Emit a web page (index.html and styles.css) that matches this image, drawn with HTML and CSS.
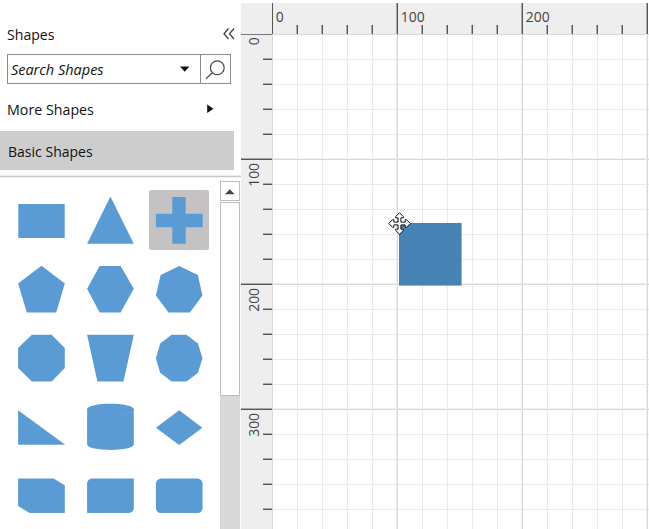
FILE: index.html
```html
<!DOCTYPE html>
<html lang="en">
<head>
<meta charset="utf-8">
<title>Diagram</title>
<link rel="stylesheet" href="styles.css">
</head>
<body>
<div class="app">
  <aside class="sidebar">
    <header class="title-row">
      <span class="label title">Shapes</span>
      <svg class="collapse" width="14" height="14" viewBox="0 0 14 14"><path d="M6.5 1.5 2 6.7 6.5 12M12 1.5 7.5 6.7 12 12"/></svg>
    </header>
    <div class="search">
      <span class="label search-text">Search Shapes</span>
      <svg class="caret" width="10" height="6" viewBox="0 0 10 6"><path d="M0 .6h9.4L4.7 5.8z"/></svg>
      <span class="search-button"><svg width="20" height="20" viewBox="0 0 20 20"><circle cx="12.3" cy="7.7" r="6.9"/><path d="M7.3 12.7 1 18.7"/></svg></span>
    </div>
    <div class="more">
      <span class="label more-text">More Shapes</span>
      <svg width="7" height="10" viewBox="0 0 7 10"><path d="M.2.5v8.6L6.5 4.8z"/></svg>
    </div>
    <div class="category"><span class="label category-text">Basic Shapes</span></div>
    <div class="browser">
      <div class="palette">
        <svg class="cell" viewBox="0 0 60 60"><path d="M7.3 13.9h46.4v34.2H7.3z"/></svg>
        <svg class="cell" viewBox="0 0 60 60"><path d="M30.4 6.6 53.8 53.8H7.1z"/></svg>
        <svg class="cell selected" viewBox="0 0 60 60"><path d="M23.3 7h13.4v16.8h17V37.2h-17v16.6H23.3V37.2H6.9V23.8h16.4z"/></svg>
        <svg class="cell" viewBox="0 0 60 60"><path d="M30.5 6.8 53.8 24.4 45.2 53.4H15.8L7.1 24.4z"/></svg>
        <svg class="cell" viewBox="0 0 60 60"><path d="M19.6 6.9h21l13.2 22.8-13.2 23.7h-21L7.1 29.7z"/></svg>
        <svg class="cell" viewBox="0 0 60 60"><path d="M30.2 6.9 48.9 15.9 53.4 36.4 40.9 53.4H19.6L6.9 36.4 11.6 15.9z"/></svg>
        <svg class="cell" viewBox="0 0 60 60"><path d="M20.8 6.8h19.8L53.8 20v20L40.6 53.5H20.8L7.1 40V20z"/></svg>
        <svg class="cell" viewBox="0 0 60 60"><path d="M7.1 6.8h46.7L43.5 53.5H17.4z"/></svg>
        <svg class="cell" viewBox="0 0 60 60"><path d="M22.6 6.8h14.9L49 15.5 53.4 30.2 49 44.7 37.5 53.5H22.6L11.2 44.7 6.9 30.2 11.2 15.5z"/></svg>
        <svg class="cell" viewBox="0 0 60 60"><path d="M7.1 13.2 54.2 47.8H7.1z"/></svg>
        <svg class="cell" viewBox="0 0 60 60"><path d="M7.1 12.3C7.1 4.8 53.8 4.8 53.8 12.3V47.3C53.8 54.8 7.1 54.8 7.1 47.3z"/><path class="seam" d="M7.5 13.4Q12 16.8 21 17.8M39 17.8Q48.5 16.8 53 13.4"/></svg>
        <svg class="cell" viewBox="0 0 60 60"><path d="M30.2 13.3 53.4 30.7 30.2 47.9 6.9 30.7z"/></svg>
        <svg class="cell" viewBox="0 0 60 60"><path d="M7.1 13.5h35.5L53.8 20.3V48H18.7L7.1 41z"/></svg>
        <svg class="cell" viewBox="0 0 60 60"><path d="M11.7 13.5h42.1v29.7Q53.2 47.5 49.2 48H7.1V18.3Q7.7 14 11.7 13.5z"/></svg>
        <svg class="cell" viewBox="0 0 60 60"><rect x="6.9" y="13.5" width="46.7" height="34.5" rx="5.2"/></svg>
      </div>
      <div class="scrollbar">
        <div class="scroll-up"><svg width="10" height="6" viewBox="0 0 10 6"><path d="M0 5.2 4.8.2 9.6 5.2z"/></svg></div>
        <div class="thumb"></div>
      </div>
    </div>
  </aside>
  <main class="editor">
    <div class="ruler top">
      <div class="unit"><span class="label">0</span><i></i><i></i><i></i><i></i></div>
      <div class="unit"><span class="label">100</span><i></i><i></i><i></i><i></i></div>
      <div class="unit"><span class="label">200</span><i></i><i></i><i></i><i></i></div>
      <div class="unit"></div>
    </div>
    <div class="ruler left">
      <div class="unit"><span class="label">0</span><i></i><i></i><i></i><i></i></div>
      <div class="unit"><span class="label">100</span><i></i><i></i><i></i><i></i></div>
      <div class="unit"><span class="label">200</span><i></i><i></i><i></i><i></i></div>
      <div class="unit"><span class="label">300</span><i></i><i></i><i></i><i></i></div>
    </div>
    <div class="canvas">
      <div class="node"></div>
      <svg class="cursor" width="23" height="23" viewBox="0 0 23 23"><path d="M11.5.7 15.3 4.5V5.8H12.9V10.1H17.2V7.7H18.5L22.3 11.5 18.5 15.3H17.2V12.9H12.9V17.2H15.3V18.5L11.5 22.3 7.7 18.5V17.2H10.1V12.9H5.8V15.3H4.5L.7 11.5 4.5 7.7H5.8V10.1H10.1V5.8H7.7V4.5z"/></svg>
    </div>
  </main>
</div>
</body>
</html>
```
FILE: styles.css
```css
* { box-sizing: border-box; }
body {
  margin: 0;
  background: #fff;
  color: #111;
  font: 15px/20px "Open Sans", "Noto Sans", sans-serif;
  overflow: hidden;
}
svg { display: block; flex: none; }
.label { display: inline-block; white-space: nowrap; transform-origin: 0 50%; }
.app { display: flex; width: 649px; height: 529px; }

.sidebar { width: 241px; flex: none; display: flex; flex-direction: column; }
.title-row { height: 54px; padding: 24px 5px 0 7px; display: flex; justify-content: space-between; }
.title { transform: scaleX(.94); }
.collapse { margin-top: 3px; fill: none; stroke: #444; stroke-width: 1.3; }
.search {
  width: 224px; height: 30px; margin-left: 7px;
  border: 1px solid #8c8c8c;
  display: flex; align-items: center;
}
.search-text { width: 172px; padding-left: 3px; font-style: italic; transform: scaleX(.965); }
.search .caret { fill: #111; }
.search-button {
  width: 30px; height: 28px; margin-left: auto;
  border-left: 1px solid #8c8c8c;
  padding: 5px 0 0 4px;
}
.search-button svg { fill: none; stroke: #484848; stroke-width: 1.2; }
.more { height: 47px; padding: 15px 0 0 7px; display: flex; }
.more-text { width: 200px; transform: scaleX(.95); }
.more svg { margin-top: 5px; fill: #111; }
.category { width: 234px; height: 39px; padding: 10px 0 0 8px; background: #cdcdcd; }
.category-text { transform: scaleX(.935); }
.browser {
  height: 354px; margin-top: 5px;
  border-top: 1px solid #e8e8e8;
  box-shadow: inset 0 1px #c8c8c8, inset 0 2px #f2f2f2;
  display: flex; justify-content: space-between;
  overflow: hidden;
}
.palette {
  display: grid;
  grid-template-columns: repeat(3, 60px);
  grid-auto-rows: 60px;
  gap: 8.8px;
  padding: 14.3px 0 0 11.4px;
}
.cell { width: 60px; height: 60px; fill: #5b9bd5; stroke: none; }
.cell.selected { background: #c4c2c3; border-radius: 2px; }
.cell .seam { fill: none; stroke: #6aa4dc; stroke-width: .8; stroke-dasharray: 5 2; }
.scrollbar { width: 20px; margin: 5px 1px 0 0; background: #d8d8d8; }
.scroll-up, .thumb { background: #fff; border: 1px solid #bdbdbd; }
.scroll-up { height: 20px; padding: 7px 0 0 4px; fill: #444; box-shadow: 0 1px #fff; }
.thumb { height: 194px; margin-top: 1px; }

.editor {
  width: 407px; height: 526px; margin-top: 3px;
  display: grid;
  grid-template: 31px 495px / 31px 376px;
  grid-template-areas: "corner top" "left canvas";
  background: #eee;
}
.ruler { display: flex; overflow: hidden; color: #444; }
.ruler .unit { display: grid; flex: none; }
.ruler .label { grid-area: 1 / 1 / 2 / -1; font-size: 15px; transform: scaleX(.93); }
.top { grid-area: top; }
.top .unit {
  width: 125px; height: 31px;
  grid-template: 31px / 24px repeat(4, 25px) 1px;
  background: linear-gradient(90deg, #555 1px, transparent 1px);
}
.top .label { padding: 3px 0 0 4px; }
.top .unit + .unit { box-shadow: -1px 0 #aaa; }
.top i {
  grid-row: 1; grid-column: var(--n); width: 2px; height: 9px; align-self: end;
  border-left: 1px solid #aaa; border-right: 1px solid #555;
}
.ruler i:nth-of-type(1) { --n: 2; }
.ruler i:nth-of-type(2) { --n: 3; }
.ruler i:nth-of-type(3) { --n: 4; }
.ruler i:nth-of-type(4) { --n: 5; }
.left { grid-area: left; flex-direction: column; }
.left .unit {
  width: 31px; height: 125px;
  grid-template: 24px repeat(4, 25px) 1px / 31px;
  background: linear-gradient(#777 1px, transparent 1px);
}
.left .unit + .unit { background: linear-gradient(#555 1px, transparent 1px); box-shadow: 0 -1px #aaa; }
.left .label {
  grid-area: 1 / 1 / -1 / 2; justify-self: start; align-self: start;
  margin: 3px 0 0 2px; writing-mode: vertical-rl; line-height: 20px;
  transform: rotate(180deg) scaleY(.93); transform-origin: 50% 50%;
}
.left i {
  grid-area: var(--n) / 1; width: 9px; height: 2px; justify-self: end;
  border-top: 1px solid #aaa; border-bottom: 1px solid #555;
}
.canvas {
  grid-area: canvas; position: relative; width: 377px;
  background-color: #fff;
  background-image:
    linear-gradient(90deg, #d8d8d8 1px, transparent 1px 124px, #f0f0f0 124px),
    linear-gradient(#d8d8d8 1px, transparent 1px 124px, #f0f0f0 124px),
    linear-gradient(90deg, #eaeaea 1px, transparent 1px),
    linear-gradient(#eaeaea 1px, transparent 1px);
  background-size: 125px 125px, 125px 125px, 25px 25px, 25px 25px;
}
.node {
  position: absolute; left: 127px; top: 189px; width: 63px; height: 63px;
  background: #4682b4;
  border: solid #90b4d2; border-width: 0 1px 1px 0;
}
.cursor { position: absolute; left: 116px; top: 178px; fill: #fff; stroke: #111; stroke-width: 1; }
```
